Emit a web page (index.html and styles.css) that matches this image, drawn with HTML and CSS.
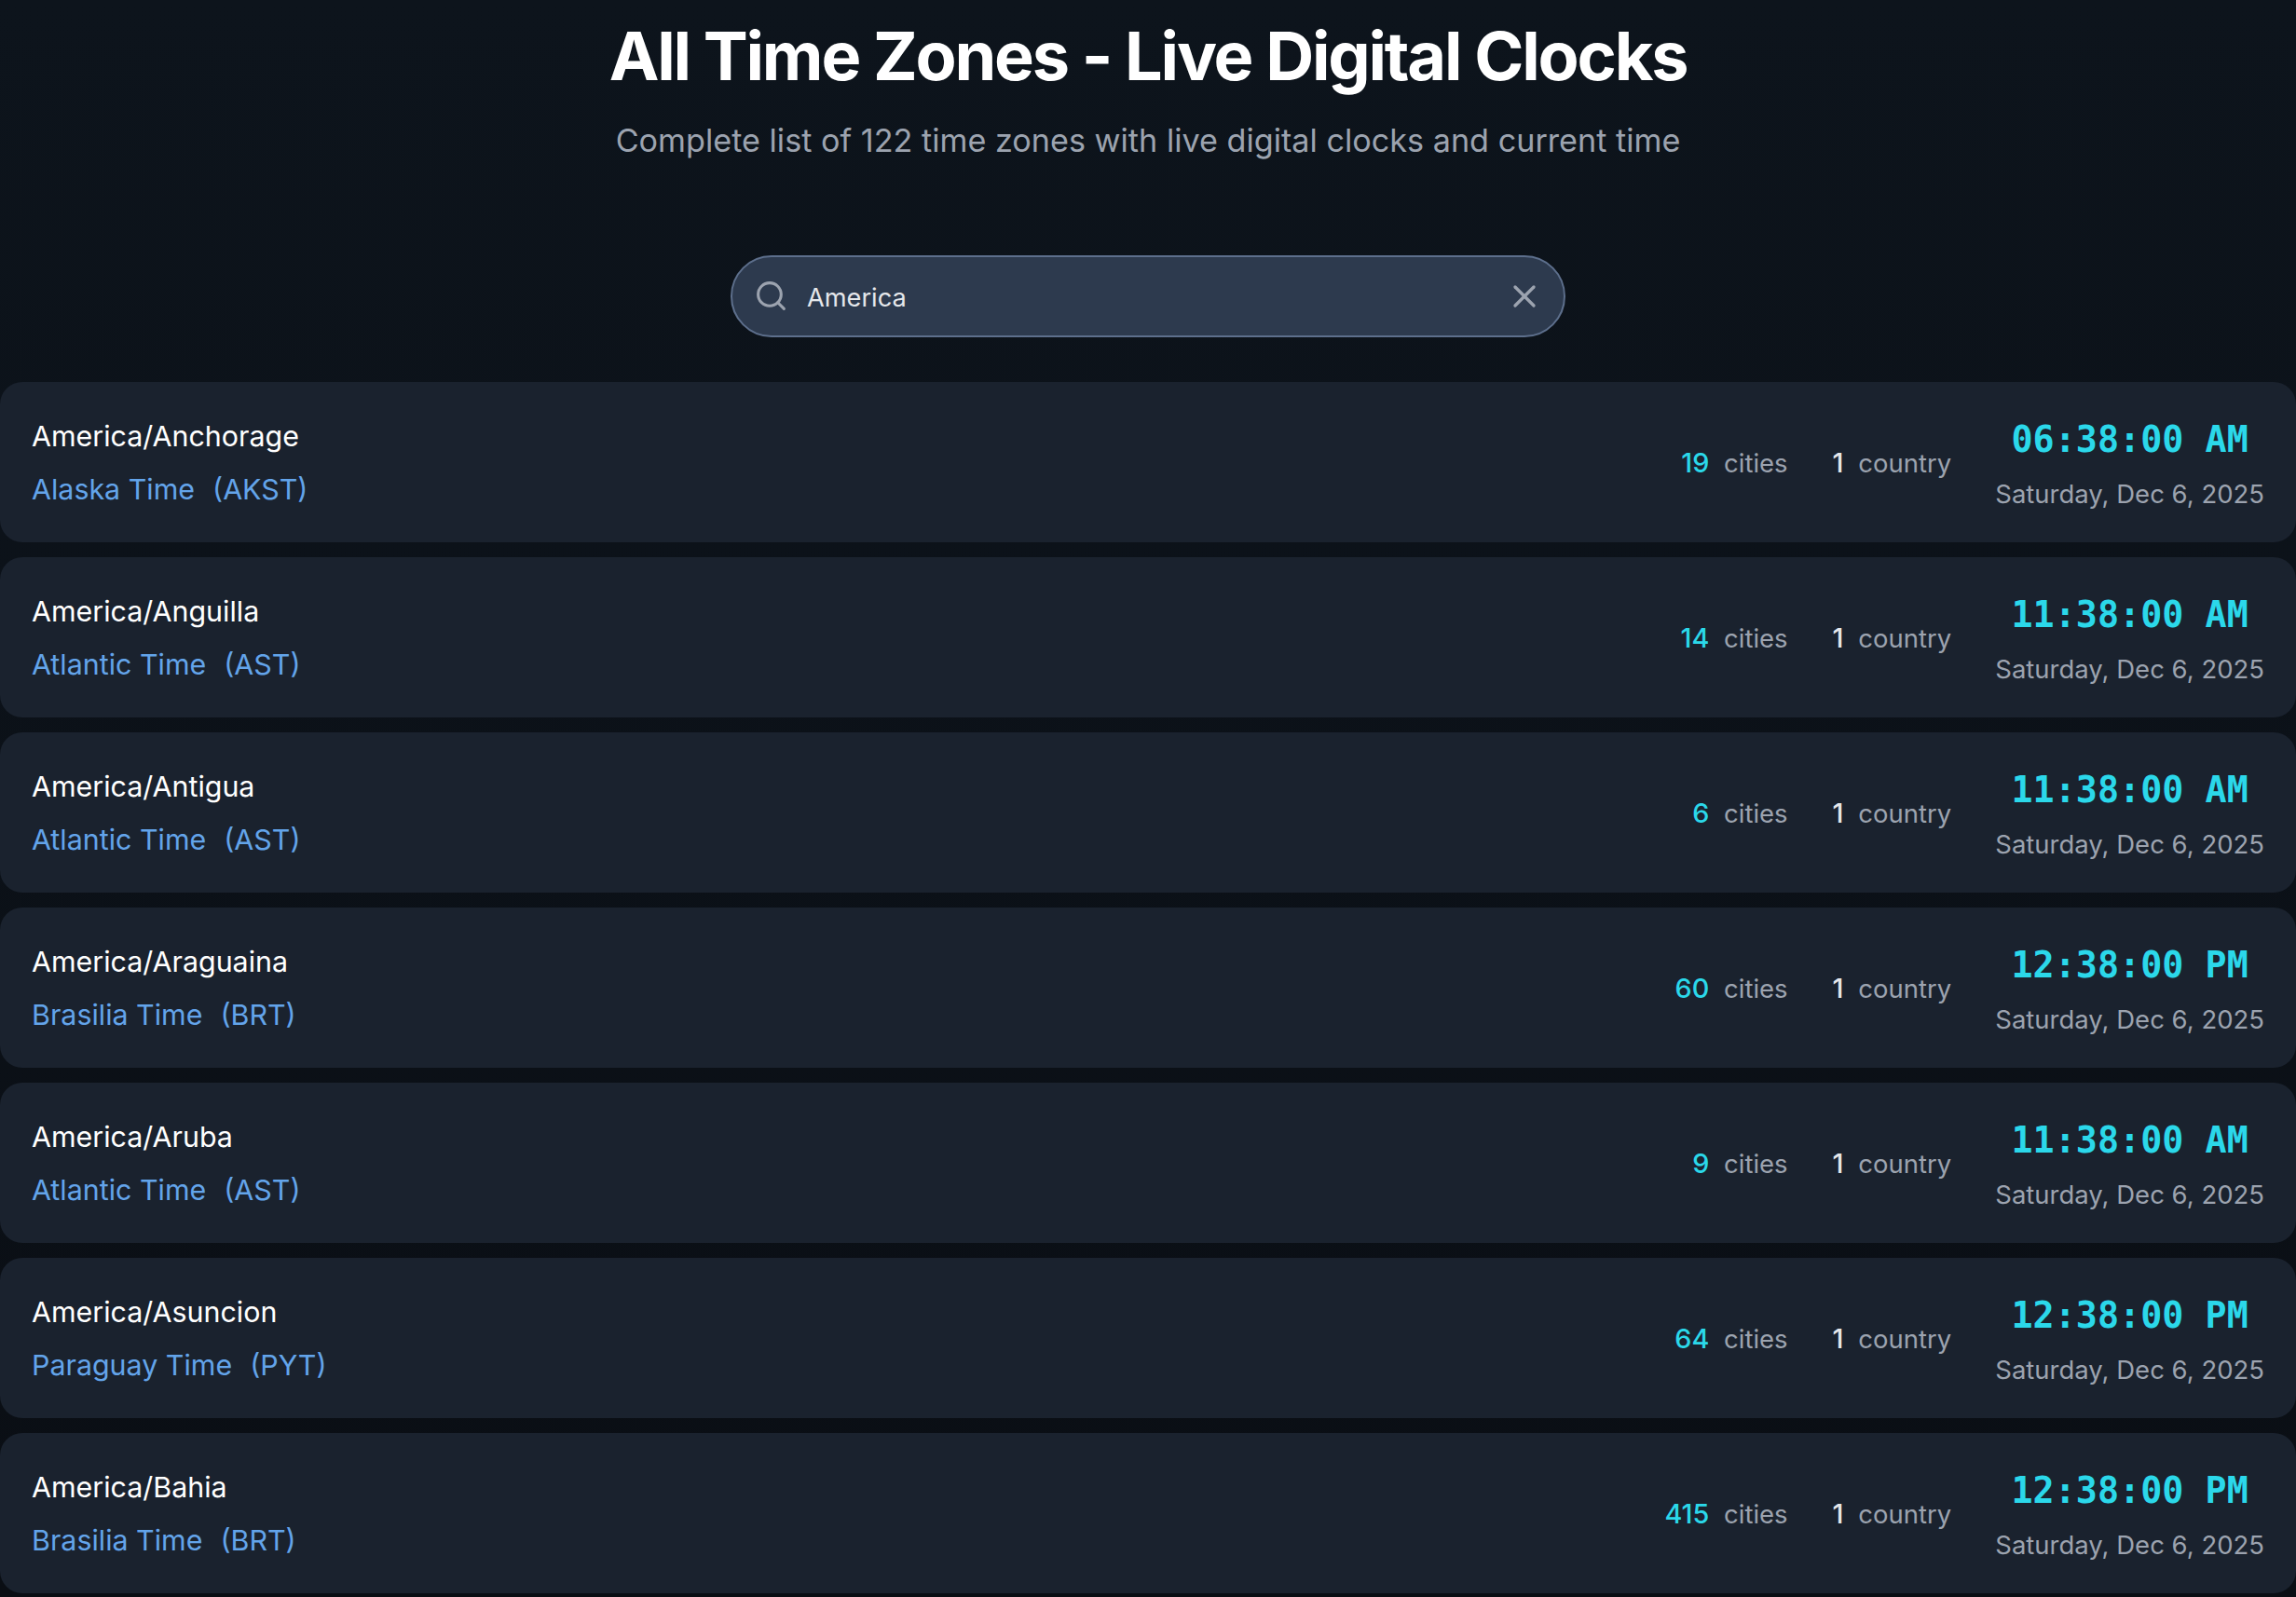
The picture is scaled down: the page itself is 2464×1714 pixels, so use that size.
FILE: index.html
```html
<!DOCTYPE html>
<html lang="en">
<head>
  <meta charset="UTF-8" />
  <meta name="viewport" content="width=device-width, initial-scale=1.0" />
  <title>All Time Zones - Live Digital Clocks</title>
  <link rel="stylesheet" href="styles.css">
</head>
<body>
  <header class="page-head">
    <h1>All Time Zones - Live Digital Clocks</h1>
    <p>Complete list of 122 time zones with live digital clocks and current time</p>
  </header>

  <div class="search">
    <svg class="search-icon" viewBox="0 0 24 24" fill="none" stroke="currentColor" stroke-width="2" stroke-linecap="round" stroke-linejoin="round"><circle cx="11" cy="11" r="8"/><path d="m21 21-4.3-4.3"/></svg>
    <span class="search-text">America</span>
    <svg class="clear-icon" viewBox="0 0 24 24" fill="none" stroke="currentColor" stroke-width="2" stroke-linecap="round" stroke-linejoin="round"><path d="M18 6 6 18"/><path d="m6 6 12 12"/></svg>
  </div>

  <main class="zones">
    <a class="zone">
      <div class="zone-info">
        <div class="zone-name">America/Anchorage</div>
        <div class="zone-label"><span>Alaska Time</span><span>(AKST)</span></div>
      </div>
      <div class="zone-counts">
        <span class="count"><b class="cyan">19</b> cities</span>
        <span class="count"><b>1</b> country</span>
      </div>
      <div class="clock"><div class="clock-time">06:38:00 AM</div><div class="clock-date">Saturday, Dec 6, 2025</div></div>
    </a>
    <a class="zone">
      <div class="zone-info">
        <div class="zone-name">America/Anguilla</div>
        <div class="zone-label"><span>Atlantic Time</span><span>(AST)</span></div>
      </div>
      <div class="zone-counts">
        <span class="count"><b class="cyan">14</b> cities</span>
        <span class="count"><b>1</b> country</span>
      </div>
      <div class="clock"><div class="clock-time">11:38:00 AM</div><div class="clock-date">Saturday, Dec 6, 2025</div></div>
    </a>
    <a class="zone">
      <div class="zone-info">
        <div class="zone-name">America/Antigua</div>
        <div class="zone-label"><span>Atlantic Time</span><span>(AST)</span></div>
      </div>
      <div class="zone-counts">
        <span class="count"><b class="cyan">6</b> cities</span>
        <span class="count"><b>1</b> country</span>
      </div>
      <div class="clock"><div class="clock-time">11:38:00 AM</div><div class="clock-date">Saturday, Dec 6, 2025</div></div>
    </a>
    <a class="zone">
      <div class="zone-info">
        <div class="zone-name">America/Araguaina</div>
        <div class="zone-label"><span>Brasilia Time</span><span>(BRT)</span></div>
      </div>
      <div class="zone-counts">
        <span class="count"><b class="cyan">60</b> cities</span>
        <span class="count"><b>1</b> country</span>
      </div>
      <div class="clock"><div class="clock-time">12:38:00 PM</div><div class="clock-date">Saturday, Dec 6, 2025</div></div>
    </a>
    <a class="zone">
      <div class="zone-info">
        <div class="zone-name">America/Aruba</div>
        <div class="zone-label"><span>Atlantic Time</span><span>(AST)</span></div>
      </div>
      <div class="zone-counts">
        <span class="count"><b class="cyan">9</b> cities</span>
        <span class="count"><b>1</b> country</span>
      </div>
      <div class="clock"><div class="clock-time">11:38:00 AM</div><div class="clock-date">Saturday, Dec 6, 2025</div></div>
    </a>
    <a class="zone">
      <div class="zone-info">
        <div class="zone-name">America/Asuncion</div>
        <div class="zone-label"><span>Paraguay Time</span><span>(PYT)</span></div>
      </div>
      <div class="zone-counts">
        <span class="count"><b class="cyan">64</b> cities</span>
        <span class="count"><b>1</b> country</span>
      </div>
      <div class="clock"><div class="clock-time">12:38:00 PM</div><div class="clock-date">Saturday, Dec 6, 2025</div></div>
    </a>
    <a class="zone">
      <div class="zone-info">
        <div class="zone-name">America/Bahia</div>
        <div class="zone-label"><span>Brasilia Time</span><span>(BRT)</span></div>
      </div>
      <div class="zone-counts">
        <span class="count"><b class="cyan">415</b> cities</span>
        <span class="count"><b>1</b> country</span>
      </div>
      <div class="clock"><div class="clock-time">12:38:00 PM</div><div class="clock-date">Saturday, Dec 6, 2025</div></div>
    </a>
  </main>
</body>
</html>
```

FILE: styles.css
```css
* { box-sizing: border-box; }
html, body { margin: 0; padding: 0; height: 100%; }
body {
  background: linear-gradient(#0d141c, #0a0e14);
  font-family: Inter, "Noto Sans", sans-serif;
  color: #fff;
  overflow: hidden;
}

.page-head { text-align: center; padding-top: 16px; }
.page-head h1 {
  margin: 0;
  font-size: 72px;
  line-height: 88px;
  font-weight: 700;
  letter-spacing: -2.2px;
}
.page-head p {
  margin: 19px 0 0;
  font-size: 34.2px;
  line-height: 56px;
  color: #9ca3af;
}

.search {
  display: flex;
  align-items: center;
  width: 896px;
  height: 88px;
  margin: 95px auto 48px;
  padding: 0 22px 0 23px;
  background: #2d3a4e;
  border: 2px solid #5d6f8c;
  border-radius: 44px;
}
.search-icon { width: 37px; height: 37px; margin-top: -1px; color: #9ca3af; flex: none; }
.search-text { flex: 1; margin-left: 20px; padding-top: 2px; font-size: 27.2px; color: #e5e7eb; }
.clear-icon { width: 40px; height: 40px; color: #9ca3af; flex: none; }

.zones { display: flex; flex-direction: column; gap: 16px; }
.zone {
  display: flex;
  align-items: center;
  height: 172px;
  padding: 0 34px;
  background: #1a222e;
  border-radius: 24px;
}
.zone-info { flex: 1; }
.zone-name { font-size: 30.4px; line-height: 48px; font-weight: 400; }
.zone-label {
  display: flex;
  gap: 19px;
  margin-top: 9px;
  font-size: 30.4px;
  line-height: 48px;
  color: #63a4ea;
}

.zone-counts { display: flex; gap: 48px; margin-right: 47px; }
.count { font-size: 27.5px; color: #9ca3af; }
.count b { margin-right: 8px; font-size: 28.8px; font-weight: 500; color: #e5e7eb; }
.count b.cyan { color: #2bd8ea; }

.clock { padding-top: 2px; text-align: center; }
.clock-time {
  font-family: "DejaVu Sans Mono", "Liberation Mono", monospace;
  font-size: 38.4px;
  line-height: 56px;
  font-weight: 700;
  color: #2bd8ea;
}
.clock-date { margin-top: 10px; font-size: 27.5px; line-height: 40px; color: #9ca3af; }
```
